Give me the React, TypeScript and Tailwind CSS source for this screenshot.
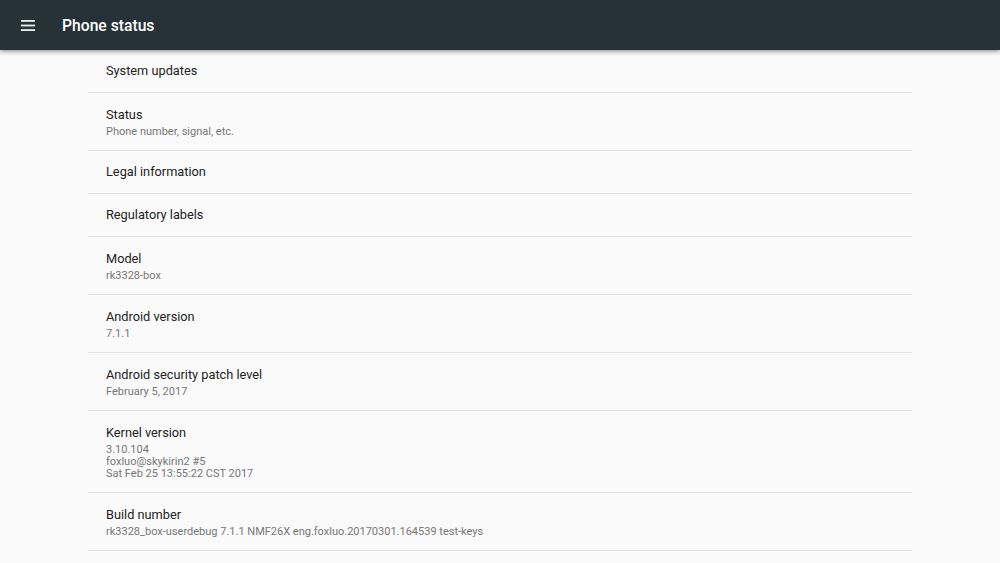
import React from "react"

type Item = {
  title: string
  lines?: string[]
}

const items: Item[] = [
  { title: "System updates" },
  { title: "Status", lines: ["Phone number, signal, etc."] },
  { title: "Legal information" },
  { title: "Regulatory labels" },
  { title: "Model", lines: ["rk3328-box"] },
  { title: "Android version", lines: ["7.1.1"] },
  { title: "Android security patch level", lines: ["February 5, 2017"] },
  { title: "Kernel version", lines: ["3.10.104", "foxluo@skykirin2 #5", "Sat Feb 25 13:55:22 CST 2017"] },
  { title: "Build number", lines: ["rk3328_box-userdebug 7.1.1 NMF26X eng.foxluo.20170301.164539 test-keys"] },
]

function MenuIcon() {
  return (
    <svg width="14" height="12" viewBox="0 0 14 12" className="block">
      <rect x="0" y="0" width="14" height="1.8" fill="#eceff1" />
      <rect x="0" y="4.6" width="14" height="1.8" fill="#eceff1" />
      <rect x="0" y="9.2" width="14" height="1.8" fill="#eceff1" />
    </svg>
  )
}

function Row({ item }: { item: Item }) {
  const twoLine = item.lines && item.lines.length > 0
  return (
    <div className={`border-b border-[#e4e4e4] pl-[18px] pr-4 ${twoLine ? "pt-[14px] pb-[12.5px]" : "py-[13px]"}`}>
      <div className="text-[12.75px] leading-[16px] text-[#222222]">{item.title}</div>
      {twoLine && (
        <div className="mt-[2.5px] text-[11px] leading-[12px] text-[#777777]">
          {item.lines!.map((l) => (
            <div key={l}>{l}</div>
          ))}
        </div>
      )}
    </div>
  )
}

export default function App() {
  return (
    <div className="w-[1000px] h-[563px] overflow-hidden bg-[#fafafa] font-['Roboto',sans-serif]">
      <div className="relative z-10 h-[50px] bg-[#263238] flex items-center shadow-[0_2px_4px_rgba(0,0,0,0.35)]">
        <div className="pl-[21px] pt-[1px]">
          <MenuIcon />
        </div>
        <div className="pl-[27px] pt-[2px] text-[15.7px] font-medium text-white">Phone status</div>
      </div>
      <div className="w-[824px] mx-auto">
        {items.map((it) => (
          <Row key={it.title} item={it} />
        ))}
      </div>
    </div>
  )
}
